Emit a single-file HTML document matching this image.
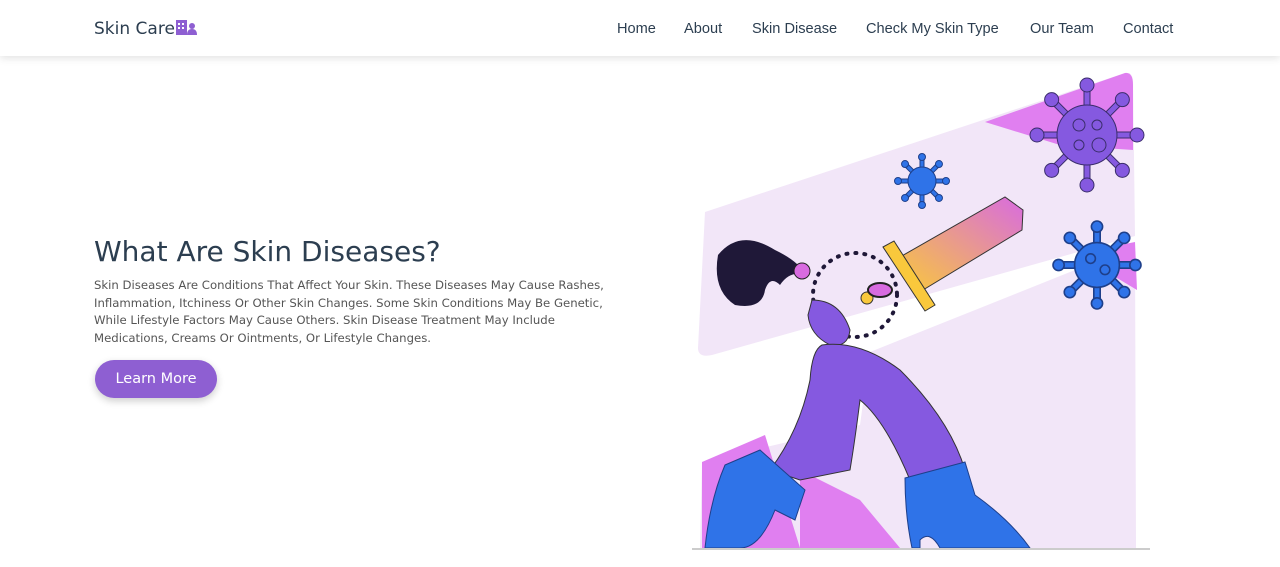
<!DOCTYPE html>
<html><head><meta charset="utf-8"><style>
*{margin:0;padding:0;box-sizing:border-box}
body{width:1280px;height:567px;background:#fff;font-family:"Liberation Sans",sans-serif;position:relative;overflow:hidden;color:#2c3e50}
.nav{position:absolute;left:0;top:0;width:1280px;height:56px;background:#fff;box-shadow:0 2px 8px rgba(0,0,0,.12);z-index:2}
.logo{position:absolute;left:94px;top:18px;color:#2c3e50;font-family:"DejaVu Sans",sans-serif;font-size:17px}
.menu{position:absolute;top:21px;font-size:14.6px;color:#2c3e50}
h1{position:absolute;left:94px;top:235px;font-size:28px;font-weight:normal;color:#2c3e50;font-family:"DejaVu Sans",sans-serif}
p{position:absolute;left:94px;top:277px;width:530px;font-size:11.7px;line-height:17.7px;color:#555;font-family:"DejaVu Sans",sans-serif}
.btn{position:absolute;left:95px;top:360px;width:122px;height:38px;border-radius:19px;background:#8e5fd2;color:#fff;font-size:14.5px;text-align:center;line-height:38px;box-shadow:0 3px 8px rgba(0,0,0,.2);font-family:"DejaVu Sans",sans-serif}
svg.il{position:absolute;left:0;top:0}
</style></head><body>
<div class="nav">
<div class="logo">Skin Care<svg width="22" height="18" viewBox="0 0 22 18" style="vertical-align:-2px"><rect x="1" y="2" width="11" height="15" fill="#8e5fd2"/><rect x="3" y="5" width="2" height="2" fill="#fff"/><rect x="7" y="5" width="2" height="2" fill="#fff"/><rect x="3" y="9" width="2" height="2" fill="#fff"/><rect x="7" y="9" width="2" height="2" fill="#fff"/><circle cx="17" cy="8" r="3" fill="#8e5fd2"/><path d="M12 17q0-6 5-6t5 6z" fill="#8e5fd2"/></svg></div>
<div class="menu" style="left:617px">Home</div>
<div class="menu" style="left:684px">About</div>
<div class="menu" style="left:752px">Skin Disease</div>
<div class="menu" style="left:866px">Check My Skin Type</div>
<div class="menu" style="left:1030px">Our Team</div>
<div class="menu" style="left:1123px">Contact</div>
</div>
<h1>What Are Skin Diseases?</h1>
<p>Skin Diseases Are Conditions That Affect Your Skin. These Diseases May Cause Rashes, Inflammation, Itchiness Or Other Skin Changes. Some Skin Conditions May Be Genetic, While Lifestyle Factors May Cause Others. Skin Disease Treatment May Include Medications, Creams Or Ointments, Or Lifestyle Changes.</p>
<div class="btn">Learn More</div>
<svg class="il" width="1280" height="567" viewBox="0 0 1280 567">
<defs><linearGradient id="sw" x1="0" y1="1" x2="1" y2="0"><stop offset="0" stop-color="#f9c83c"/><stop offset="1" stop-color="#d86be0"/></linearGradient></defs>
<path d="M705 212L1125 73Q1132 72 1133 80L1135 236L712 355Q698 358 698 348Z" fill="#f2e6f8"/>
<path d="M870 352L1135 246L1136 548L700 548L702 462L860 425Z" fill="#f2e6f8"/>
<path d="M985 122L1125 73Q1133 72 1133 85L1133 150L1060 145Z" fill="#e07ff0"/>
<path d="M1110 247L1135 242L1137 290L1112 275Z" fill="#e07ff0"/>
<path d="M702 462L765 435L800 548L702 548Z" fill="#e07ff0"/>
<path d="M800 470L860 500L900 548L800 548Z" fill="#e07ff0"/>
<g fill="#8559e0" stroke="#3a2d6b" stroke-width="1">
<g transform="translate(1087,135)"><g id="sp"><rect x="-3" y="-50" width="6" height="25"/><circle cx="0" cy="-50" r="7"/></g>
<use href="#sp" transform="rotate(45)"/><use href="#sp" transform="rotate(90)"/><use href="#sp" transform="rotate(135)"/><use href="#sp" transform="rotate(180)"/><use href="#sp" transform="rotate(225)"/><use href="#sp" transform="rotate(270)"/><use href="#sp" transform="rotate(315)"/>
<circle r="30"/><circle cx="-8" cy="-10" r="6"/><circle cx="10" cy="-10" r="5"/><circle cx="-8" cy="10" r="5"/><circle cx="12" cy="10" r="7"/></g></g>
<g fill="#2f73e8" stroke="#1e3f8a" stroke-width="1">
<g transform="translate(922,181)"><g id="sb"><rect x="-2" y="-24" width="4" height="12"/><circle cx="0" cy="-24" r="3.5"/></g>
<use href="#sb" transform="rotate(45)"/><use href="#sb" transform="rotate(90)"/><use href="#sb" transform="rotate(135)"/><use href="#sb" transform="rotate(180)"/><use href="#sb" transform="rotate(225)"/><use href="#sb" transform="rotate(270)"/><use href="#sb" transform="rotate(315)"/><circle r="14"/></g>
<g transform="translate(1097,265) scale(1.6)"><use href="#sb"/><use href="#sb" transform="rotate(45)"/><use href="#sb" transform="rotate(90)"/><use href="#sb" transform="rotate(135)"/><use href="#sb" transform="rotate(180)"/><use href="#sb" transform="rotate(225)"/><use href="#sb" transform="rotate(270)"/><use href="#sb" transform="rotate(315)"/><circle r="14"/><circle cx="-4" cy="-4" r="3"/><circle cx="5" cy="3" r="3"/></g></g>
<path d="M900 257L1005 197L1023 210L1022 230L923 290Z" fill="url(#sw)" stroke="#333" stroke-width="1"/>
<path d="M883 247L894 241L935 305L925 311Z" fill="#f9c83c" stroke="#333"/>
<circle cx="867" cy="298" r="6" fill="#f9c83c" stroke="#333"/>
<ellipse cx="880" cy="290" rx="12" ry="7" fill="#d86be0" stroke="#222" stroke-width="2"/>
<path d="M718 255Q740 228 775 250Q800 262 805 275Q790 270 780 285Q770 275 765 290Q762 310 735 305Q712 290 718 255Z" fill="#1f1838"/>
<circle cx="802" cy="271" r="8" fill="#d86be0" stroke="#222"/>
<circle cx="855" cy="295" r="42" fill="none" stroke="#1f1838" stroke-width="4" stroke-dasharray="1 8" stroke-linecap="round"/>
<path d="M812 300Q840 300 850 330Q848 348 830 345Q810 335 808 315Z" fill="#8559e0" stroke="#333"/>
<path d="M822 345Q860 340 900 370Q950 420 965 470L910 480Q885 420 860 400Q855 440 850 470L800 480L770 470Q800 430 810 380Q812 350 822 345Z" fill="#8559e0" stroke="#333"/>
<path d="M725 465L760 450L805 490L795 520L775 510Q760 548 740 548L705 548Q710 500 725 465Z" fill="#2f73e8" stroke="#1e3f8a"/>
<path d="M905 478L965 462L975 495Q1010 520 1030 548L940 548Q930 530 920 540L920 548L912 548Q905 515 905 478Z" fill="#2f73e8" stroke="#1e3f8a"/>
<line x1="692" y1="549" x2="1150" y2="549" stroke="#ccc" stroke-width="2"/>
</svg>
</body></html>
